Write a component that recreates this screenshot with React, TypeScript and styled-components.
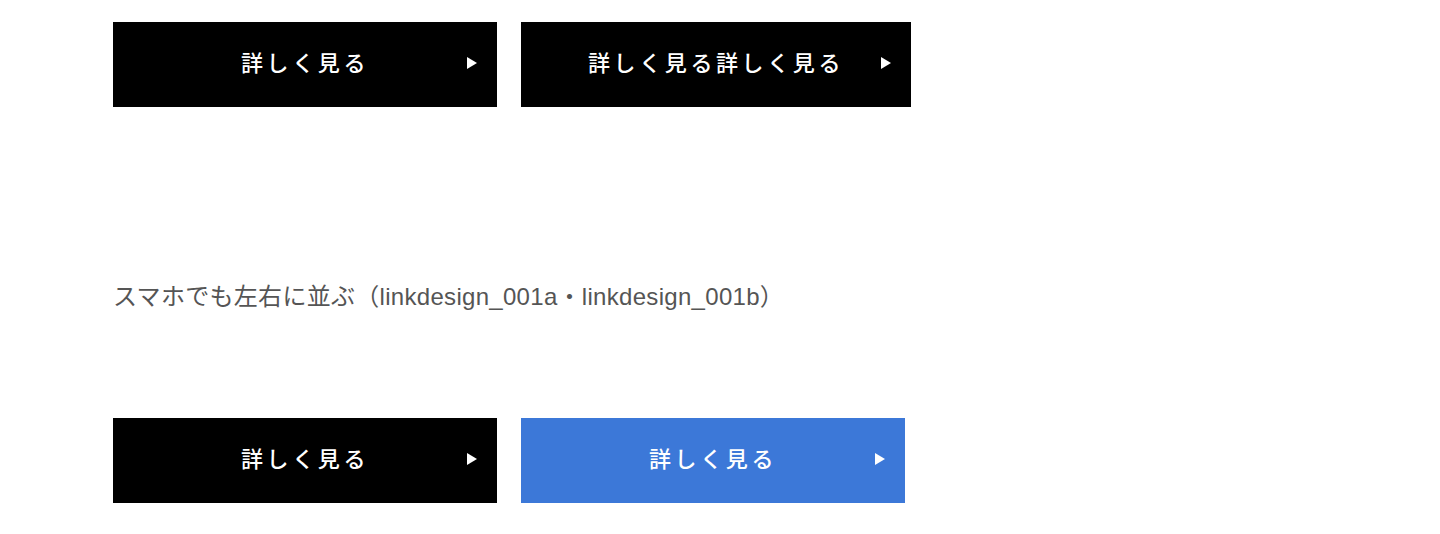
import React from "react";
import styled, { createGlobalStyle } from "styled-components";

const GlobalStyle = createGlobalStyle`
  html, body {
    margin: 0;
    padding: 0;
    background: #ffffff;
  }
  body {
    font-family: "Liberation Sans", "Noto Sans CJK JP", sans-serif;
  }
`;

const Page = styled.div`
  display: flex;
  flex-direction: column;
  align-items: flex-start;
  padding: 22px 0 0 113px;
`;

const ButtonRow = styled.div`
  display: flex;
  gap: 24px;
`;

const LinkButton = styled.a<{ $tone?: "black" | "blue" }>`
  position: relative;
  display: flex;
  align-items: center;
  justify-content: center;
  box-sizing: border-box;
  min-width: 384px;
  height: 85px;
  padding: 0 67px 7px;
  background: ${(p) => (p.$tone === "blue" ? "#3c78d8" : "#000000")};
  color: #ffffff;
  text-decoration: none;
  font-family: "Noto Sans CJK JP", sans-serif;
  font-size: 22px;
  font-weight: 500;
  letter-spacing: 3.6px;
  line-height: 1;
  cursor: pointer;

  &::after {
    content: "";
    position: absolute;
    right: 20px;
    top: calc(50% - 8px);
    width: 0;
    height: 0;
    border-left: 10px solid #ffffff;
    border-top: 6px solid transparent;
    border-bottom: 6px solid transparent;
  }
`;

const Note = styled.p`
  margin: 173px 0 104px;
  font-family: "Liberation Sans", "Noto Sans CJK JP", sans-serif;
  font-size: 24px;
  line-height: 34px;
  letter-spacing: 0.3px;
  color: #555555;
`;

export default function App() {
  return (
    <>
      <GlobalStyle />
      <Page>
        <ButtonRow>
          <LinkButton href="#">詳しく見る</LinkButton>
          <LinkButton href="#">詳しく見る詳しく見る</LinkButton>
        </ButtonRow>
        <Note>スマホでも左右に並ぶ（linkdesign_001a・linkdesign_001b）</Note>
        <ButtonRow>
          <LinkButton href="#">詳しく見る</LinkButton>
          <LinkButton href="#" $tone="blue">詳しく見る</LinkButton>
        </ButtonRow>
      </Page>
    </>
  );
}
